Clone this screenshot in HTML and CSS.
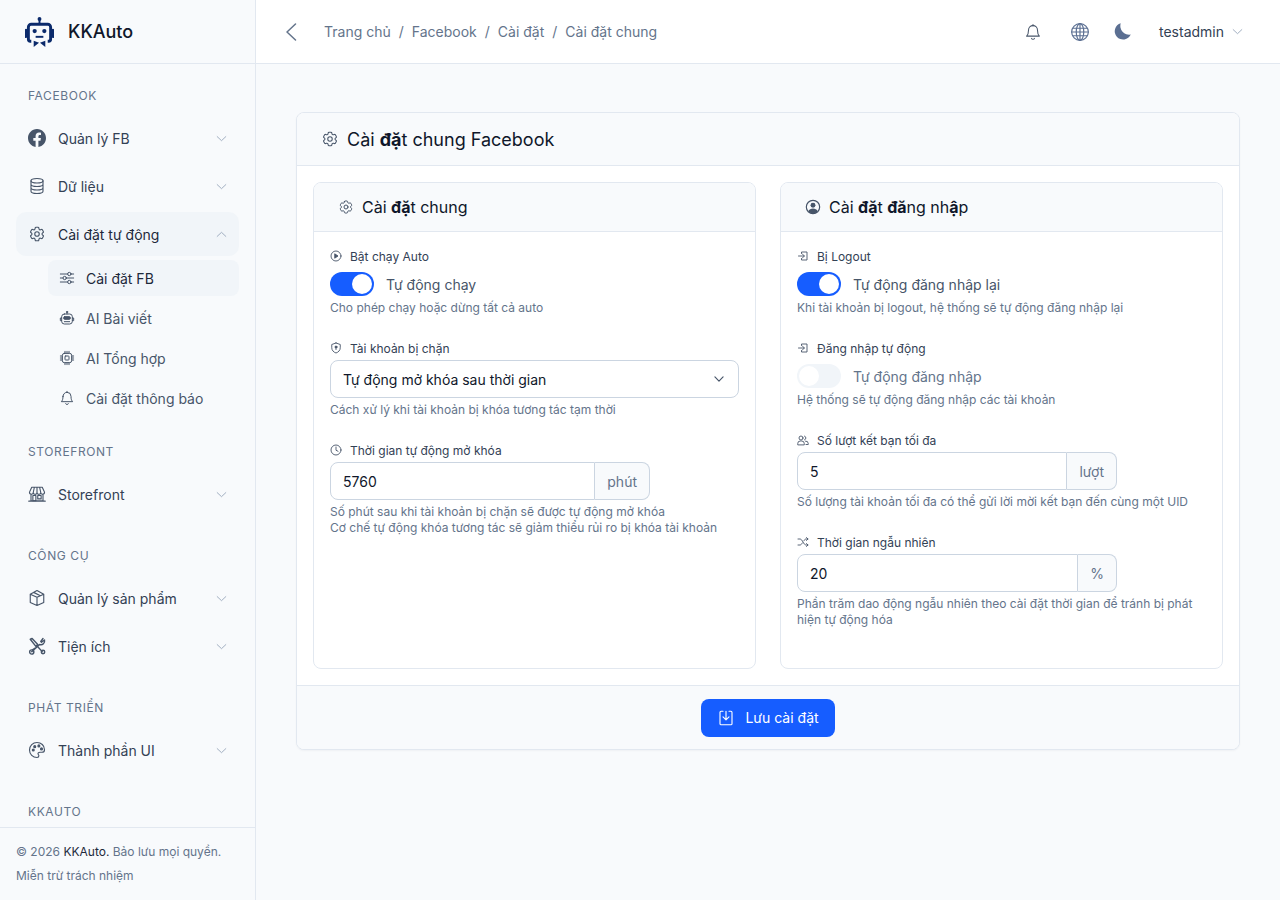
FILE: index.html
```html
<!DOCTYPE html>
<html lang="vi">
<head>
<meta charset="utf-8">
<title>Cài đặt chung Facebook</title>
<link rel="stylesheet" href="styles.css">
</head>
<body>
<svg class="defs" width="0" height="0" aria-hidden="true">
  <symbol id="i-gear" viewBox="0 0 24 24"><path d="M9.594 3.94c.09-.542.56-.94 1.11-.94h2.593c.55 0 1.02.398 1.11.94l.213 1.281c.063.374.313.686.645.87.074.04.147.083.22.127.325.196.72.257 1.075.124l1.217-.456a1.125 1.125 0 0 1 1.37.49l1.296 2.247a1.125 1.125 0 0 1-.26 1.431l-1.003.827c-.293.241-.438.613-.43.992a7.723 7.723 0 0 1 0 .255c-.008.378.137.75.43.991l1.004.827c.424.35.534.955.26 1.43l-1.298 2.247a1.125 1.125 0 0 1-1.369.491l-1.217-.456c-.355-.133-.75-.072-1.076.124a6.47 6.47 0 0 1-.22.128c-.331.183-.581.495-.644.869l-.213 1.281c-.09.543-.56.94-1.11.94h-2.594c-.55 0-1.019-.398-1.11-.94l-.213-1.281c-.062-.374-.312-.686-.644-.87a6.52 6.52 0 0 1-.22-.127c-.325-.196-.72-.257-1.076-.124l-1.217.456a1.125 1.125 0 0 1-1.369-.49l-1.297-2.247a1.125 1.125 0 0 1 .26-1.431l1.004-.827c.292-.24.437-.613.43-.991a6.932 6.932 0 0 1 0-.255c.007-.38-.138-.751-.43-.992l-1.004-.827a1.125 1.125 0 0 1-.26-1.43l1.297-2.247a1.125 1.125 0 0 1 1.37-.491l1.216.456c.356.133.751.072 1.076-.124.072-.044.146-.086.22-.128.332-.183.582-.495.644-.869l.214-1.28Z"/><path d="M15 12a3 3 0 1 1-6 0 3 3 0 0 1 6 0Z"/></symbol>
  <symbol id="i-down" viewBox="0 0 24 24"><path d="m4 8.5 8 7.5 8-7.5"/></symbol>
  <symbol id="i-up" viewBox="0 0 24 24"><path d="m4 15.5 8-7.5 8 7.5"/></symbol>
  <symbol id="i-bell" viewBox="0 0 24 24"><path d="M6 9.5a6 6 0 0 1 12 0c0 4.5 1 6.5 2.5 8h-17C5 16 6 14 6 9.5Z"/><path d="M12 3.5V2M10 20.5a2.2 2.2 0 0 0 4 0"/></symbol>
  <symbol id="i-login" viewBox="0 0 24 24"><path d="M9 7V4h11v16H9v-3M3 12h11M11 8.500l4 3.500-4 3.500"/></symbol>
</svg>

<div class="app">
  <aside class="sidebar">
    <div class="brand">
      <svg class="logo" viewBox="0 0 30 32"><circle cx="15" cy="2.500" r="2" fill="#0b2a6b"/><path d="M14 3h2v5h-2z" fill="#0b2a6b"/><path d="M6.500 25.500h-1a2 2 0 0 1-2-2V11a3 3 0 0 1 3-3h17a3 3 0 0 1 3 3v12.500a2 2 0 0 1-2 2h-1" fill="none" stroke="#0b2a6b" stroke-width="3"/><path d="M1 14v7M29 14v7" stroke="#0b2a6b" stroke-width="2.500" stroke-linecap="round"/><circle cx="10" cy="15" r="2.200" fill="#0b2a6b"/><circle cx="20" cy="15" r="2.200" fill="#0b2a6b"/><path d="M11 21h8" stroke="#0b2a6b" stroke-width="2"/><path d="M9 25l5.500 2.200L9 31.500zM21 25l-5.500 2.200L21 31.500z" fill="#0b2a6b"/></svg>
      <span class="brand-name">KKAuto</span>
    </div>
    <nav class="nav">
      <div class="nav-label">FACEBOOK</div>
      <a class="nav-item"><svg class="ni solid" viewBox="0 0 16 16"><path d="M16 8.049c0-4.446-3.582-8.05-8-8.05C3.58 0-.002 3.603-.002 8.05c0 4.017 2.926 7.347 6.75 7.951v-5.625h-2.03V8.05H6.75V6.275c0-2.017 1.195-3.131 3.022-3.131.876 0 1.791.157 1.791.157v1.98h-1.009c-.993 0-1.303.621-1.303 1.258v1.51h2.218l-.354 2.326H9.25V16c3.824-.604 6.75-3.934 6.75-7.951z"/></svg><span class="nt">Quản lý FB</span><svg class="chev"><use href="#i-down"/></svg></a>
      <a class="nav-item"><svg class="ni line" viewBox="0 0 24 24"><ellipse cx="12" cy="5" rx="8" ry="3"/><path d="M4 5v14c0 1.700 3.600 3 8 3s8-1.300 8-3V5M4 9.700c0 1.700 3.600 3 8 3s8-1.300 8-3M4 14.300c0 1.700 3.600 3 8 3s8-1.300 8-3"/></svg><span class="nt">Dữ liệu</span><svg class="chev"><use href="#i-down"/></svg></a>
      <a class="nav-item open"><svg class="ni line"><use href="#i-gear"/></svg><span class="nt">Cài đặt tự động</span><svg class="chev"><use href="#i-up"/></svg></a>
      <div class="sub">
        <a class="sub-item active"><svg class="si line" viewBox="0 0 24 24"><path d="M2 6h11M18 6h4M2 12h4M11 12h11M2 18h11M18 18h4"/><circle cx="15.500" cy="6" r="2.500"/><circle cx="8.500" cy="12" r="2.500"/><circle cx="15.500" cy="18" r="2.500"/></svg><span>Cài đặt FB</span></a>
        <a class="sub-item"><svg class="si line" viewBox="0 0 24 24"><path d="M12 6V3"/><circle cx="12" cy="3" r="1"/><rect x="4" y="6" width="16" height="15" rx="4"/><rect x="7" y="10" width="10" height="4" rx="1.500" fill="#475569"/><path d="M4 12H2v4h2M20 12h2v4h-2M8 17.500h8"/></svg><span>AI Bài viết</span></a>
        <a class="sub-item"><svg class="si line" viewBox="0 0 24 24"><rect x="5" y="5" width="14" height="14" rx="3"/><rect x="9" y="9" width="6" height="6" rx="1"/><path d="M9 2v3M12 2v3M15 2v3M9 19v3M12 19v3M15 19v3M2 9h3M2 12h3M2 15h3M19 9h3M19 12h3M19 15h3"/></svg><span>AI Tổng hợp</span></a>
        <a class="sub-item"><svg class="si line"><use href="#i-bell"/></svg><span>Cài đặt thông báo</span></a>
      </div>
      <div class="nav-label gap">STOREFRONT</div>
      <a class="nav-item"><svg class="ni line" viewBox="0 0 24 24"><path d="M5 3h14l3 6.500a2.500 2.500 0 0 1-5 .500 2.500 2.500 0 0 1-5 0 2.500 2.500 0 0 1-5 0 2.500 2.500 0 0 1-5-.500L5 3ZM8.500 3 7 10M15.500 3 17 10M12 3v7M4 12v9h16v-9M1 21.500h22"/><rect x="6.500" y="14" width="4" height="7"/><rect x="13" y="14" width="4.500" height="4.500"/></svg><span class="nt">Storefront</span><svg class="chev"><use href="#i-down"/></svg></a>
      <div class="nav-label gap">CÔNG CỤ</div>
      <a class="nav-item"><svg class="ni line" viewBox="0 0 24 24"><path d="M12 22 3 18V7l9 4 9-4v11l-9 4ZM12 11v11M3 7l9-5 9 5M7.500 4.500l9 4.500"/></svg><span class="nt">Quản lý sản phẩm</span><svg class="chev"><use href="#i-down"/></svg></a>
      <a class="nav-item"><svg class="ni line thick" viewBox="0 0 24 24"><path d="M3 3l2.500-1L13 10l-2.500 2.500zM9 15l-3 2M20 2l-3 4 1 1 4-3a5 5 0 0 1-6.500 6L5 19.500"/><circle cx="5" cy="20" r="2.800"/><path d="m13 13 6 6.500"/><circle cx="20" cy="20" r="2.300"/></svg><span class="nt">Tiện ích</span><svg class="chev"><use href="#i-down"/></svg></a>
      <div class="nav-label gap">PHÁT TRIỂN</div>
      <a class="nav-item"><svg class="ni line" viewBox="0 0 24 24"><path d="M12 2a10 10 0 0 0 0 20c1.700 0 2.500-1 2.500-2.300 0-.700-.4-1.200-.8-1.700-.5-.6-.4-1.700 0-2.200.5-.6 1.300-.8 2.300-.8h2.500c2 0 3.500-1.500 3.500-3.500C22 6 17.500 2 12 2Z"/><circle cx="7" cy="12" r="1.300" fill="#475569"/><circle cx="9" cy="7.500" r="1.300" fill="#475569"/><circle cx="14.500" cy="6.500" r="1.300" fill="#475569"/><circle cx="18" cy="10.500" r="1.300" fill="#475569"/></svg><span class="nt">Thành phần UI</span><svg class="chev"><use href="#i-down"/></svg></a>
      <div class="nav-label gap">KKAUTO</div>
    </nav>
    <footer class="side-foot">
      <p>© 2026 <span class="dark">KKAuto.</span> Bảo lưu mọi quyền.</p>
      <p>Miễn trừ trách nhiệm</p>
    </footer>
  </aside>

  <div class="main">
    <header class="topbar">
      <svg class="back line" viewBox="0 0 12 18"><path d="M10.500 1 2 9l8.500 8"/></svg>
      <ol class="crumbs">
        <li>Trang chủ</li><li class="sep">/</li><li>Facebook</li><li class="sep">/</li><li>Cài đặt</li><li class="sep">/</li><li>Cài đặt chung</li>
      </ol>
      <div class="top-right">
        <svg class="ti bell"><use href="#i-bell"/></svg>
        <svg class="ti globe" viewBox="0 0 24 24"><circle cx="12" cy="12" r="10"/><ellipse cx="12" cy="12" rx="4.500" ry="10"/><path d="M12 2v20M2 12h20M3.300 7.500h17.400M3.300 16.500h17.400"/></svg>
        <svg class="ti moon" viewBox="0 0 24 24"><path d="M10.500 1.500a10 10 0 1 0 12 13.500A10.500 10.500 0 0 1 10.500 1.500Z"/></svg>
        <span class="user">testadmin</span>
        <svg class="user-chev"><use href="#i-down"/></svg>
      </div>
    </header>

    <main class="content">
      <section class="card">
        <div class="card-head">
          <svg class="head-icon line"><use href="#i-gear"/></svg>
          <h1>Cài <b>đặ</b>t chung Facebook</h1>
        </div>
        <div class="card-body">
          <section class="panel">
            <div class="panel-head">
              <svg class="panel-icon line"><use href="#i-gear"/></svg>
              <h2>Cài <b>đặ</b>t chung</h2>
            </div>
            <div class="panel-body">
              <div class="field">
                <label class="lbl"><svg class="li" viewBox="0 0 24 24"><circle cx="12" cy="12" r="10"/><path d="m10 8 6 4-6 4Z" fill="#475569"/></svg>Bật chạy Auto</label>
                <div class="switch-row"><span class="switch on"><i></i></span><span class="switch-text">Tự động chạy</span></div>
                <p class="help flush">Cho phép chạy hoặc dừng tất cả auto</p>
              </div>
              <div class="field">
                <label class="lbl"><svg class="li" viewBox="0 0 24 24"><path d="M12 2 3.500 5v6.500c0 5 3.500 8.800 8.500 10.500 5-1.700 8.500-5.500 8.500-10.500V5L12 2Z"/><circle cx="12" cy="10" r="2" fill="#475569"/><path d="M12 11v4"/></svg>Tài khoản bị chặn</label>
                <div class="select"><span>Tự động mở khóa sau thời gian</span><svg class="sel-chev" viewBox="0 0 24 24"><path d="m5 8.500 7 7 7-7"/></svg></div>
                <p class="help">Cách xử lý khi tài khoản bị khóa tương tác tạm thời</p>
              </div>
              <div class="field">
                <label class="lbl"><svg class="li" viewBox="0 0 24 24"><circle cx="12" cy="12" r="10"/><path d="M12 6v6.500l4 2"/></svg>Thời gian tự động mở khóa</label>
                <div class="input-group w320"><input class="input" value="5760"><span class="addon">phút</span></div>
                <p class="help">Số phút sau khi tài khoản bị chặn sẽ được tự động mở khóa<br>Cơ chế tự động khóa tương tác sẽ giảm thiểu rủi ro bị khóa tài khoản</p>
              </div>
            </div>
          </section>

          <section class="panel">
            <div class="panel-head">
              <svg class="panel-icon solid-user" viewBox="0 0 24 24"><circle cx="12" cy="12" r="10" fill="none" stroke="#475569" stroke-width="1.800"/><circle cx="12" cy="9.500" r="3.700" fill="#475569"/><path d="M5 18.500c1-3 4-4.300 7-4.300s6 1.300 7 4.300A10 10 0 0 1 12 22a10 10 0 0 1-7-3.500Z" fill="#475569"/></svg>
              <h2>Cài <b>đặ</b>t <b>đă</b>ng nh<b>ậ</b>p</h2>
            </div>
            <div class="panel-body">
              <div class="field">
                <label class="lbl"><svg class="li"><use href="#i-login"/></svg>Bị Logout</label>
                <div class="switch-row"><span class="switch on"><i></i></span><span class="switch-text">Tự động đăng nhập lại</span></div>
                <p class="help flush">Khi tài khoản bị logout, hệ thống sẽ tự động đăng nhập lại</p>
              </div>
              <div class="field">
                <label class="lbl"><svg class="li"><use href="#i-login"/></svg>Đăng nhập tự động</label>
                <div class="switch-row"><span class="switch"><i></i></span><span class="switch-text off">Tự động đăng nhập</span></div>
                <p class="help flush">Hệ thống sẽ tự động đăng nhập các tài khoản</p>
              </div>
              <div class="field">
                <label class="lbl"><svg class="li" viewBox="0 0 24 24"><circle cx="8" cy="8" r="4"/><path d="M1.500 21v-2a5 5 0 0 1 5-5h3a5 5 0 0 1 5 5v2ZM15 4.200a4 4 0 0 1 0 7.600M17 14.200a5 5 0 0 1 5.500 4.800v2H18"/></svg>Số lượt kết bạn tối đa</label>
                <div class="input-group w320"><input class="input" value="5"><span class="addon">lượt</span></div>
                <p class="help">Số lượng tài khoản tối đa có thể gửi lời mời kết bạn đến cùng một UID</p>
              </div>
              <div class="field">
                <label class="lbl"><svg class="li" viewBox="0 0 24 24"><path d="M2 6h4c5 0 7 12 12 12h4M2 18h4c2 0 3.500-2 4.500-4M14 9.500C15 7.500 16 6 18 6h4M19 3l3 3-3 3M19 15l3 3-3 3"/></svg>Thời gian ngẫu nhiên</label>
                <div class="input-group w320"><input class="input" value="20"><span class="addon pct">%</span></div>
                <p class="help">Phần trăm dao động ngẫu nhiên theo cài đặt thời gian để tránh bị phát hiện tự động hóa</p>
              </div>
            </div>
          </section>
        </div>
        <div class="card-foot">
          <button class="btn" type="button"><svg class="btn-icon" viewBox="0 0 24 24"><path d="M8 3H5.500A1.500 1.500 0 0 0 4 4.500v15A1.500 1.500 0 0 0 5.500 21h13a1.500 1.500 0 0 0 1.500-1.500v-15A1.500 1.500 0 0 0 18.500 3H16M12 3v11M8 10.500l4 4 4-4"/></svg>Lưu cài đặt</button>
        </div>
      </section>
    </main>
  </div>
</div>
</body>
</html>
```
FILE: styles.css
```css
* { box-sizing: border-box; }
html, body { margin: 0; height: 100%; }
body { font-family: Inter, "Noto Sans", sans-serif; font-size: 14px; color: #0f172a; background: #f8fafc; overflow: hidden; }
.defs { position: absolute; }
p, h1, h2, ol { margin: 0; padding: 0; }
svg { flex: none; display: block; }
.line, .li, .chev, .user-chev, .ti, .sel-chev, .btn-icon { fill: none; stroke-linecap: round; stroke-linejoin: round; }
.line { stroke: #475569; stroke-width: 1.5; }

.app { display: flex; height: 900px; }
.sidebar { width: 256px; flex: none; display: flex; flex-direction: column; background: #f8fafc; border-right: 1px solid #e2e8f0; }
.brand { height: 64px; flex: none; display: flex; align-items: center; gap: 14px; padding-left: 25px; border-bottom: 1px solid #e2e8f0; }
.logo { width: 29px; height: 32px; }
.brand-name { font-size: 18px; font-weight: 500; color: #0f172a; }
.nav { flex: 1; min-height: 0; overflow: hidden; padding: 20px 16px 0; }
.nav-label { height: 24px; margin-bottom: 8px; padding-left: 12px; line-height: 24px; font-size: 12px; letter-spacing: .05em; color: #64748b; }
.nav-label.gap { margin-top: 28px; }
.nav-item { display: flex; align-items: center; height: 44px; margin-bottom: 4px; padding: 0 12px; border-radius: 10px; color: #334155; }
.nav-item.open { background: #f1f5f9; color: #1e293b; }
.ni { width: 18px; height: 18px; margin-right: 12px; }
.ni.solid { fill: #475569; }
.ni.thick { stroke-width: 1.9; }
.nt { flex: 1; }
.chev { width: 13px; height: 13px; stroke: #94a3b8; stroke-width: 1.600; margin-right: -1px; }
.sub { padding-left: 32px; margin-bottom: -4px; }
.sub-item { display: flex; align-items: center; height: 36px; margin-bottom: 4px; padding-left: 11px; border-radius: 8px; color: #475569; }
.sub-item.active { background: #f1f5f9; color: #1e293b; }
.si { width: 16px; height: 16px; margin-right: 11px; stroke-width: 1.500; }
.side-foot { height: 73px; flex: none; padding: 12px 16px 0; border-top: 1px solid #e2e8f0; font-size: 12px; line-height: 24px; color: #64748b; }
.dark { color: #1e293b; }

.main { flex: 1; min-width: 0; display: flex; flex-direction: column; }
.topbar { height: 64px; flex: none; display: flex; align-items: center; padding: 0 36px 0 29px; background: #fff; border-bottom: 1px solid #e2e8f0; }
.back { width: 12px; height: 18px; margin-right: 27px; stroke: #64748b; }
.crumbs { display: flex; list-style: none; gap: 8px; color: #64748b; }
.top-right { margin-left: auto; display: flex; align-items: center; }
.ti { width: 18px; height: 18px; stroke: #475569; stroke-width: 1.400; }
.globe { width: 20px; height: 20px; margin-left: 28px; stroke: #5b6f92; }
.moon { width: 20px; height: 20px; margin-left: 22px; fill: #5b6f92; stroke: none; }
.user { margin-left: 27px; color: #334155; }
.user-chev { width: 13px; height: 13px; margin-left: 7px; stroke: #94a3b8; stroke-width: 1.600; }

.content { flex: 1; padding: 48px 40px; }
.card { background: #fff; border: 1px solid #e2e8f0; border-radius: 8px; box-shadow: 0 1px 2px rgba(15, 23, 42, .04); overflow: hidden; }
.card-head { height: 53px; display: flex; align-items: center; gap: 8px; padding-left: 24px; background: #f8fafc; border-bottom: 1px solid #e2e8f0; }
.head-icon { width: 18px; height: 18px; stroke-width: 1.400; }
h1 { font-size: 18px; font-weight: 400; color: #0f172a; }
h2 { font-size: 16px; font-weight: 400; color: #0f172a; }
h1 b, h2 b { font-weight: 700; }
.card-body { display: grid; grid-template-columns: 1fr 1fr; gap: 24px; padding: 16px; }
.panel { border: 1px solid #e2e8f0; border-radius: 8px; overflow: hidden; }
.panel-head { height: 49px; display: flex; align-items: center; gap: 8px; padding-left: 24px; background: #f8fafc; border-bottom: 1px solid #e2e8f0; }
.panel-icon { width: 16px; height: 16px; stroke-width: 1.500; }
.panel-body { padding: 16px; }
.field { margin-bottom: 24px; }
.lbl { display: flex; align-items: center; gap: 8px; height: 16px; margin-bottom: 4px; font-size: 12px; color: #334155; }
.li { width: 12px; height: 12px; stroke: #475569; stroke-width: 1.800; }
.switch-row { display: flex; align-items: center; gap: 12px; height: 32px; }
.switch { display: flex; width: 44px; height: 24px; padding: 2px; border-radius: 12px; background: #f1f5f9; }
.switch.on { justify-content: flex-end; background: #165dff; }
.switch i { width: 20px; height: 20px; border-radius: 50%; background: #fff; }
.switch-text { color: #475569; }
.switch-text.off { color: #64748b; }
.help { margin-top: 4px; font-size: 12px; line-height: 16px; color: #64748b; }
.help.flush { margin-top: 0; }
.select { display: flex; align-items: center; justify-content: space-between; height: 38px; padding: 0 12px; border: 1px solid #cbd5e1; border-radius: 8px; background: #fff; }
.sel-chev { width: 14px; height: 14px; stroke: #475569; stroke-width: 2; }
.input-group { display: flex; height: 38px; }
.w320 { width: 320px; }
.input { flex: 1; min-width: 0; padding: 0 12px; border: 1px solid #cbd5e1; border-radius: 8px 0 0 8px; font: inherit; color: #0f172a; background: #fff; outline: none; }
.addon { display: flex; align-items: center; padding: 0 12px; border: 1px solid #cbd5e1; border-left: 0; border-radius: 0 8px 8px 0; background: #f8fafc; color: #64748b; }
.card-foot { height: 64px; display: flex; align-items: center; justify-content: center; background: #f8fafc; border-top: 1px solid #e2e8f0; }
.btn { display: flex; align-items: center; gap: 10px; height: 38px; padding: 0 16px; border: 0; border-radius: 8px; background: #165dff; color: #fff; font: inherit; }
.btn-icon { width: 18px; height: 18px; stroke: #fff; stroke-width: 1.500; }
```
